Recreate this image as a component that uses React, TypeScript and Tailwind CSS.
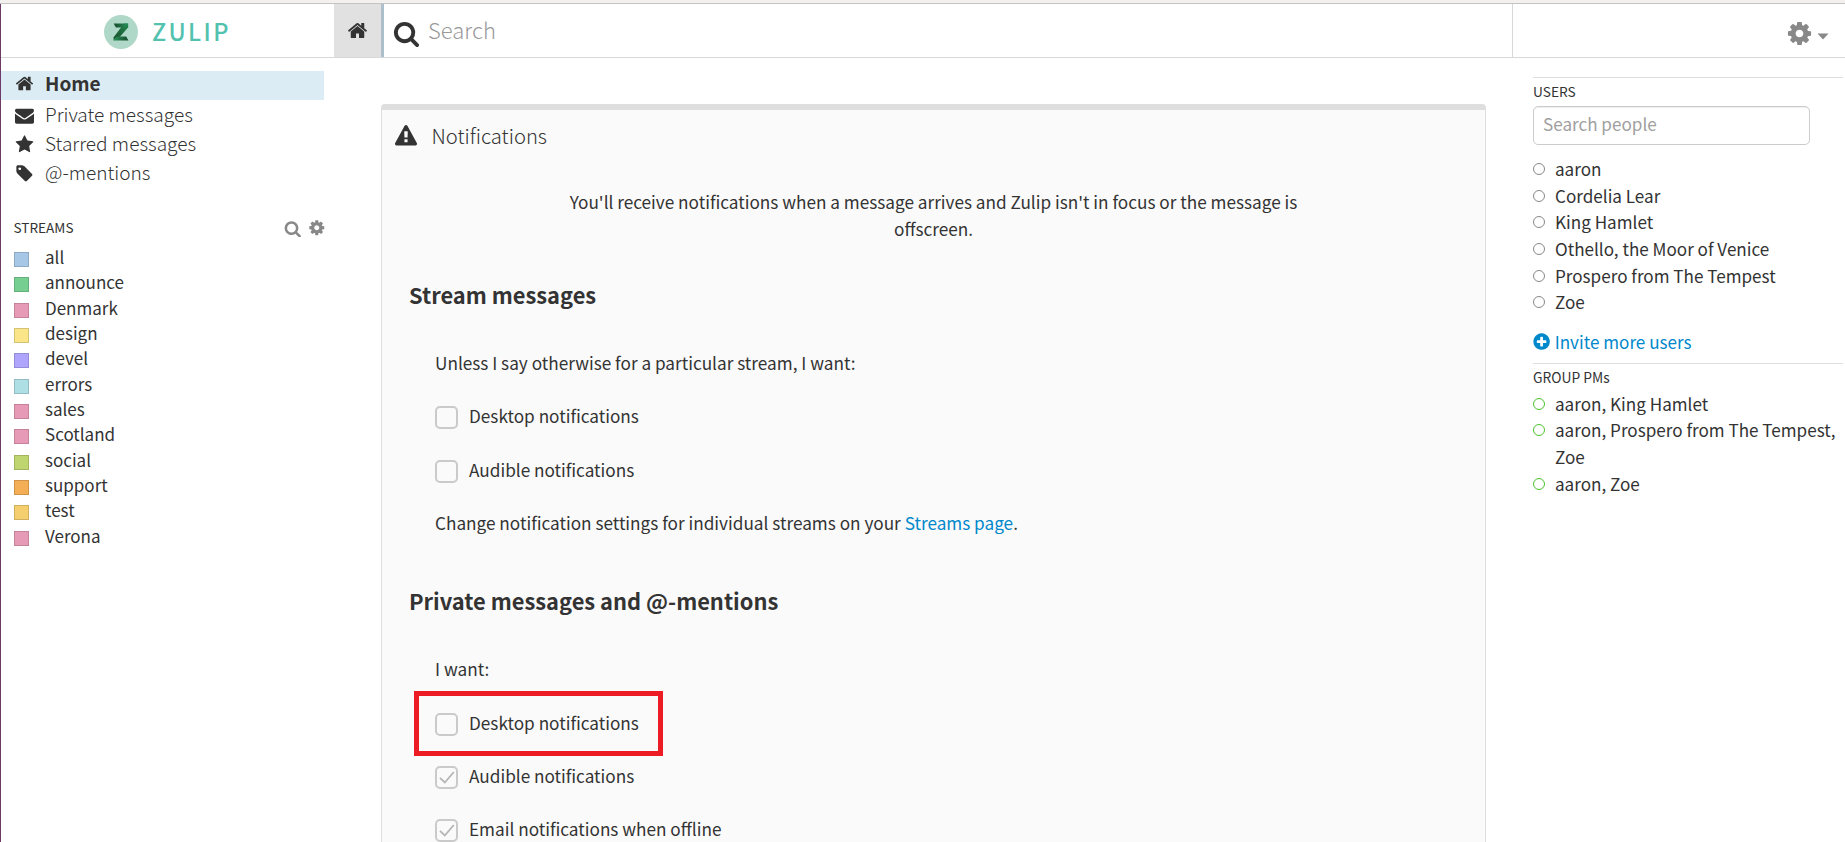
import type { ReactNode } from "react";

const ICONS = {
  home: "M1472 992v480q0 26-19 45t-45 19h-384v-384h-256v384h-384q-26 0-45-19t-19-45v-480q0-1 .5-3t.5-3l575-474 575 474q1 2 1 6zm223-69l-62 74q-8 9-21 11h-3q-13 0-21-7l-692-577-692 577q-12 8-24 7-13-2-21-11l-62-74q-8-10-7-23.5t11-21.5l719-599q32-26 76-26t76 26l244 204v-195q0-14 9-23t23-9h192q14 0 23 9t9 23v408l219 182q10 8 11 21.5t-7 23.5z",
  search: "M1216 832q0-185-131.5-316.5t-316.5-131.5-316.5 131.5-131.5 316.5 131.5 316.5 316.5 131.5 316.5-131.5 131.5-316.5zm512 832q0 52-38 90t-90 38q-54 0-90-38l-343-342q-179 124-399 124-143 0-273.5-55.5t-225-150-150-225-55.5-273.5 55.5-273.5 150-225 225-150 273.5-55.5 273.5 55.5 225 150 150 225 55.5 273.5q0 220-124 399l343 343q37 37 37 90z",
  envelope: "M1792 710v794q0 66-47 113t-113 47h-1472q-66 0-113-47t-47-113v-794q44 49 101 87 362 246 497 345 57 42 92.5 65.5t94.5 48 110 24.5h2q51 0 110-24.5t94.5-48 92.5-65.5q170-123 498-345 57-39 100-87zm0-294q0 79-49 151t-122 123q-376 261-468 325-10 7-42.5 31t-54 38.5-52 32.5-57.5 27-50 9h-2q-23 0-50-9t-57.5-27-52-32.5-54-38.5-42.5-31q-91-64-262-182.5t-205-142.5q-62-42-117-115.5t-55-136.5q0-78 41.5-130t118.5-52h1472q65 0 112.5 47t47.5 113z",
  star: "M1728 647q0 22-26 48l-363 354 86 500q1 7 1 20 0 21-10.5 35.5t-30.5 14.5q-19 0-40-12l-449-236-449 236q-22 12-40 12-21 0-31.5-14.5t-10.5-35.5q0-6 2-20l86-500-364-354q-25-27-25-48 0-37 56-46l502-73 225-455q19-41 49-41t49 41l225 455 502 73q56 9 56 46z",
  tag: "M576 448q0-53-37.5-90.5t-90.5-37.5-90.5 37.5-37.5 90.5 37.5 90.5 90.5 37.5 90.5-37.5 37.5-90.5zm1067 576q0 53-37 90l-491 492q-39 37-91 37-53 0-90-37l-715-716q-38-37-64.5-101t-26.5-117v-416q0-52 38-90t90-38h416q53 0 117 26.5t102 64.5l715 714q37 39 37 91z",
  cog: "M1152 896q0-106-75-181t-181-75-181 75-75 181 75 181 181 75 181-75 75-181zm512-109v222q0 12-8 23t-20 13l-185 28q-19 54-39 91 35 50 107 138 10 12 10 25t-9 23q-27 37-99 108t-94 71q-12 0-26-9l-138-108q-44 23-91 38-16 136-29 186-7 28-36 28h-222q-14 0-24.5-8.5t-11.5-21.5l-28-184q-49-16-90-37l-141 107q-10 9-25 9-14 0-25-11-126-114-165-168-7-10-7-23 0-12 8-23 15-21 51-66.5t54-70.5q-27-50-41-99l-183-27q-13-2-21-12.5t-8-23.5v-222q0-12 8-23t19-13l186-28q14-46 39-92-40-57-107-138-10-12-10-24 0-10 9-23 26-36 98.5-107.5t94.5-71.5q13 0 26 10l138 107q44-23 91-38 16-136 29-186 7-28 36-28h222q14 0 24.5 8.5t11.5 21.5l28 184q49 16 90 37l142-107q9-9 24-9 13 0 25 10 129 119 165 170 7 8 7 22 0 12-8 23-15 21-51 66.5t-54 70.5q26 50 41 98l183 28q13 2 21 12.5t8 23.5z",
  plus: "M1344 960v-128q0-26-19-45t-45-19h-256v-256q0-26-19-45t-45-19h-128q-26 0-45 19t-19 45v256h-256q-26 0-45 19t-19 45v128q0 26 19 45t45 19h256v256q0 26 19 45t45 19h128q26 0 45-19t19-45v-256h256q26 0 45-19t19-45zm320-64q0 209-103 385.5t-279.5 279.5-385.5 103-385.5-103-279.5-279.5-103-385.5 103-385.5 279.5-279.5 385.5-103 385.5 103 279.5 279.5 103 385.5z",
  warning: "M1024 1375v-190q0-14-9.5-23.5t-22.5-9.5h-192q-13 0-22.5 9.5t-9.5 23.5v190q0 14 9.5 23.5t22.5 9.5h192q13 0 22.5-9.5t9.5-23.5zm-2-374l18-459q0-12-10-19-13-11-24-11h-220q-11 0-24 11-10 7-10 21l17 457q0 10 10 16.5t24 6.5h185q14 0 23.5-6.5t10.5-16.5zm-14-934l768 1408q35 63-2 126-17 29-46.5 46t-63.5 17h-1536q-34 0-63.5-17t-46.5-46q-37-63-2-126l768-1408q17-31 47-49t65-18 65 18 47 49z",
};

function Icon({ name, className }: { name: keyof typeof ICONS; className: string }) {
  return (
    <svg viewBox="0 0 1792 1792" fill="currentColor" className={`shrink-0 ${className}`} aria-hidden="true">
      <path d={ICONS[name]} />
    </svg>
  );
}

const streams = [
  { name: "all", swatch: "bg-[#a6c7e5]" },
  { name: "announce", swatch: "bg-[#76ce90]" },
  { name: "Denmark", swatch: "bg-[#e79ab5]" },
  { name: "design", swatch: "bg-[#fae589]" },
  { name: "devel", swatch: "bg-[#b0a5fd]" },
  { name: "errors", swatch: "bg-[#addfe5]" },
  { name: "sales", swatch: "bg-[#e79ab5]" },
  { name: "Scotland", swatch: "bg-[#e79ab5]" },
  { name: "social", swatch: "bg-[#bfd56f]" },
  { name: "support", swatch: "bg-[#f4ae55]" },
  { name: "test", swatch: "bg-[#f5ce6e]" },
  { name: "Verona", swatch: "bg-[#e79ab5]" },
];

const users = ["aaron", "Cordelia Lear", "King Hamlet", "Othello, the Moor of Venice", "Prospero from The Tempest", "Zoe"];
const groups = ["aaron, King Hamlet", "aaron, Prospero from The Tempest, Zoe", "aaron, Zoe"];

function Logo() {
  return (
    <svg viewBox="0 0 34 34" className="size-[34px] shrink-0" aria-hidden="true">
      <defs>
        <linearGradient id="fold" x1="1" y1="0" x2="0" y2="1">
          <stop offset="0" stopColor="#1f8a4c" />
          <stop offset="1" stopColor="#1c4a2c" />
        </linearGradient>
        <linearGradient id="bar" x1="0" y1="0" x2="1" y2="0">
          <stop offset="0" stopColor="#17492b" />
          <stop offset="1" stopColor="#27945a" />
        </linearGradient>
        <linearGradient id="base" x1="0" y1="0" x2="1" y2="0">
          <stop offset="0" stopColor="#2a9358" />
          <stop offset="1" stopColor="#17492b" />
        </linearGradient>
      </defs>
      <circle cx="17" cy="17" r="17" fill="#afd8c8" />
      <path d="M20 8.500h4.200v3.700L14.500 23.500 9.700 25.500v-3.200z" fill="url(#fold)" />
      <path d="M9.700 8.500h14.500l-3.500 4.100h-8.800z" fill="url(#bar)" />
      <path d="M13.200 21.500h9l2.200 4H9.700v-1.500z" fill="url(#base)" />
    </svg>
  );
}

function NavRow({ icon, children }: { icon: keyof typeof ICONS; children: ReactNode }) {
  return (
    <li className="flex h-[29px] gap-[11px] pl-[14px] text-[19.100px] leading-[25px] font-light">
      <Icon name={icon} className="mt-[4px] size-[19px]" />
      {children}
    </li>
  );
}

function Person({ name, ring }: { name: string; ring: string }) {
  return (
    <li className="flex gap-[10px]">
      <span className={`mt-[7px] size-[12px] shrink-0 rounded-full border ${ring}`} />
      {name}
    </li>
  );
}

function CheckRow({ label, checked = false, highlight = false }: { label: string; checked?: boolean; highlight?: boolean }) {
  return (
    <div className="relative flex h-[53.33px] gap-[11px]">
      <span className="mt-[4px] size-[23px] shrink-0 rounded-[5px] border-2 border-[#cacaca]">
        {checked && (
          <svg viewBox="0 0 19 19" className="size-[19px]" fill="none" stroke="#b5b5b5" strokeWidth="1.8" aria-hidden="true">
            <path d="M3 9.800 7.800 14.500 16.800 4" />
          </svg>
        )}
      </span>
      {label}
      {highlight && <span className="absolute top-[-18px] left-[-21px] h-[65px] w-[249px] border-5 border-[#ed1c24]" />}
    </div>
  );
}

export default function App() {
  return (
    <div className="flex h-[842px] w-[1845px] flex-col overflow-hidden bg-white font-['Noto_Sans_CJK_SC',sans-serif] text-[#333]">
      <div className="h-[4px] shrink-0 border-b border-[#c6c4c1] bg-[#f2f1f0]" />
      <div className="flex min-h-0 flex-1 flex-col border-l border-[#6b3a66]">
        <header className="flex h-[54px] shrink-0 border-b border-[#d8d8d8]">
          <div className="flex w-[333px] pl-[103px]">
            <div className="pt-[11px]"><Logo /></div>
            <span className="ml-[14px] pt-[11px] text-[23.500px] leading-[32px] font-medium tracking-[2.400px] text-[#52c2af]">ZULIP</span>
          </div>
          <div className="w-[50px] border-r-3 border-[#adbfcb] bg-[#e1e1e1] pt-[16px] pl-[13px]">
            <Icon name="home" className="size-[21px]" />
          </div>
          <div className="flex flex-1 pl-[9px]">
            <Icon name="search" className="mt-[16px] size-[27px]" />
            <span className="ml-[8px] pt-[9px] text-[22px] leading-[32px] font-light text-[#999]">Search</span>
          </div>
          <div className="flex w-[333px] border-l border-[#d8d8d8] pl-[273px] text-[#888]">
            <Icon name="cog" className="mt-[16px] size-[27px]" />
            <svg viewBox="0 0 12 7" className="mt-[29px] ml-[4px] h-[7px] w-[12px]" fill="currentColor" aria-hidden="true">
              <path d="M.5.500h11L6 6.500z" />
            </svg>
          </div>
        </header>

        <div className="flex min-h-0 flex-1">
          <nav className="w-[323px] shrink-0 pt-[13px]">
            <div className="mb-[2px] flex h-[29px] gap-[11px] bg-[#dcecf5] pl-[14px] text-[19px] leading-[23px] font-bold">
              <Icon name="home" className="mt-[3px] size-[19px]" />
              Home
            </div>
            <ul>
              <NavRow icon="envelope">Private messages</NavRow>
              <NavRow icon="star">Starred messages</NavRow>
              <NavRow icon="tag">@-mentions</NavRow>
            </ul>
            <div className="mt-[28px] flex h-[20px] pl-[12.500px] text-[13.600px] leading-[20px]">
              STREAMS
              <Icon name="search" className="mt-[2.500px] ml-auto size-[17.500px] text-[#888]" />
              <Icon name="cog" className="mt-[2px] mr-[-1px] ml-[6px] size-[17.500px] text-[#888]" />
            </div>
            <ul className="mt-[7px] text-[17px] leading-[25.330px]">
              {streams.map((s) => (
                <li key={s.name} className="flex gap-[16px] pl-[13px]">
                  <span className={`mt-[8px] size-[15px] border border-black/15 ${s.swatch}`} />
                  {s.name}
                </li>
              ))}
            </ul>
          </nav>

          <main className="mt-[46px] ml-[57px] w-[1105px] shrink-0 rounded-t-[4px] border-x border-t-6 border-[#dedede] bg-[#fafafa]">
            <div className="flex pt-[11px] pl-[13px] text-[20.200px] leading-[30px] font-light">
              <Icon name="warning" className="mt-[4px] size-[22px]" />
              <span className="ml-[14.500px]">Notifications</span>
            </div>
            <p className="mx-auto mt-[37px] w-[750px] text-center text-[17.190px] leading-[27px]">
              You'll receive notifications when a message arrives and Zulip isn't in focus or the message is offscreen.
            </p>
            <h3 className="mt-[38px] pl-[27px] text-[21.850px] leading-[30px] font-bold">Stream messages</h3>
            <div className="mt-[39px] pl-[53px] text-[17.200px] leading-[27px]">
              <p className="h-[53.330px]">Unless I say otherwise for a particular stream, I want:</p>
              <CheckRow label="Desktop notifications" />
              <CheckRow label="Audible notifications" />
              <p className="h-[53.330px]">
                Change notification settings for individual streams on your <a className="text-[#0088cc]">Streams page</a>.
              </p>
            </div>
            <h3 className="mt-[24px] pl-[27px] text-[21.850px] leading-[30px] font-bold">Private messages and @-mentions</h3>
            <div className="mt-[39px] pl-[53px] text-[17.200px] leading-[27px]">
              <p className="h-[53.330px]">I want:</p>
              <CheckRow label="Desktop notifications" highlight />
              <CheckRow label="Audible notifications" checked />
              <CheckRow label="Email notifications when offline" checked />
            </div>
          </main>

          <aside className="ml-[47px] w-[310px] shrink-0 pt-[19px] text-[17.100px] leading-[26.670px]">
            <div className="h-px bg-[#dedede]" />
            <div className="mt-[3px] text-[13.700px] leading-[20px]">USERS</div>
            <input
              placeholder="Search people"
              className="mt-[5px] block h-[39px] w-[277px] rounded-[5px] border border-[#ccc] px-[9px] pb-[5px] leading-[27px] shadow-[inset_0_1px_1px_rgba(0,0,0,0.075)] placeholder:text-[#a0a0a0]"
            />
            <ul className="mt-[11px]">
              {users.map((u) => (
                <Person key={u} name={u} ring="border-[#888]" />
              ))}
            </ul>
            <a className="mt-[12.500px] flex gap-[4px] text-[#0088cc]">
              <Icon name="plus" className="mt-[3.500px] -ml-[1.500px] size-[19.200px]" />
              Invite more users
            </a>
            <div className="mt-[7.500px] h-px bg-[#dedede]" />
            <div className="mt-[3px] text-[13.800px] leading-[20px]">GROUP PMs</div>
            <ul className="mt-[4px]">
              {groups.map((g) => (
                <Person key={g} name={g} ring="border-[#4ac22c]" />
              ))}
            </ul>
          </aside>
        </div>
      </div>
    </div>
  );
}
